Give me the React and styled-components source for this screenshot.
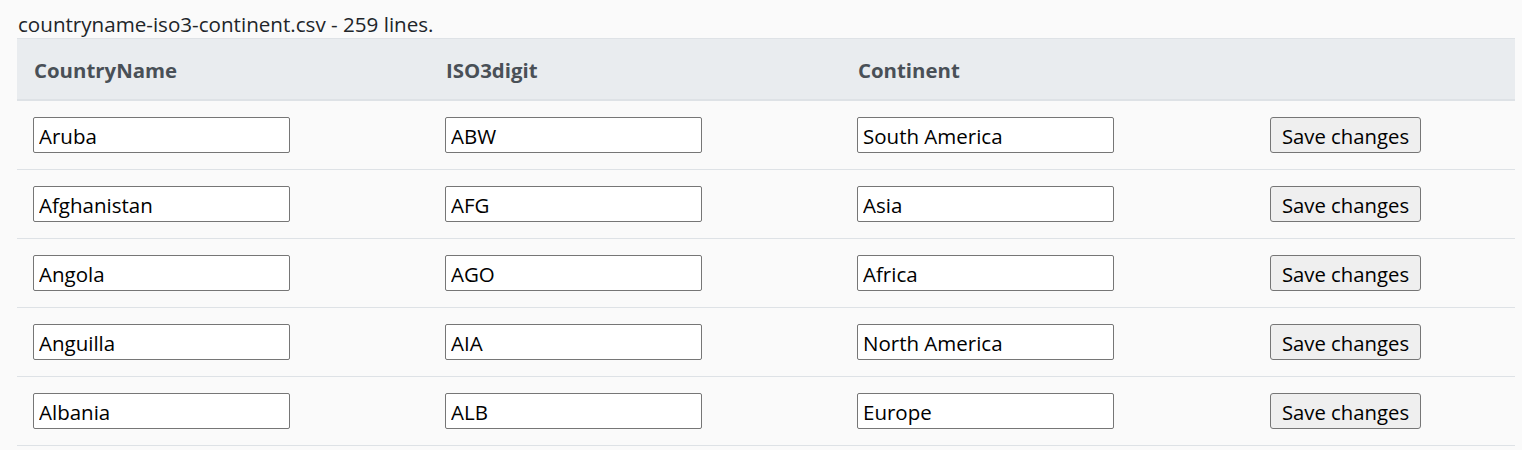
import styled, { createGlobalStyle } from "styled-components";

const countries = [
  { name: "Aruba", iso: "ABW", continent: "South America" },
  { name: "Afghanistan", iso: "AFG", continent: "Asia" },
  { name: "Angola", iso: "AGO", continent: "Africa" },
  { name: "Anguilla", iso: "AIA", continent: "North America" },
  { name: "Albania", iso: "ALB", continent: "Europe" },
];

const App = () => {
  const rows = countries.map((item) => (
    <Row key={item.iso}>
      <Cell>
        <TextInput defaultValue={item.name} />
      </Cell>
      <Cell>
        <TextInput defaultValue={item.iso} />
      </Cell>
      <Cell>
        <TextInput defaultValue={item.continent} />
      </Cell>
      <Cell>
        <SaveBtn>Save changes</SaveBtn>
      </Cell>
    </Row>
  ));

  return (
    <>
      <GlobalStyle />
      <Page>
        <Caption>countryname-iso3-continent.csv - 259 lines.</Caption>
        <Table>
          <HeadRow>
            <HeadCell>CountryName</HeadCell>
            <HeadCell>ISO3digit</HeadCell>
            <HeadCell>Continent</HeadCell>
            <HeadCell />
          </HeadRow>
          {rows}
        </Table>
      </Page>
    </>
  );
};

const GlobalStyle = createGlobalStyle`
  body {
    margin: 0;
    background: #fafafa;
    font-family: "Open Sans", "Noto Sans", sans-serif;
    color: #212529;
  }
`;

const Page = styled.div`
  padding: 0 7px 0 17px;
`;

const Caption = styled.div`
  height: 38px;
  padding-left: 1px;
  font-size: 20.6px;
  line-height: 48px;
  color: #212529;
  white-space: nowrap;
`;

const Table = styled.div`
  width: 1498px;
`;

const HeadRow = styled.div`
  display: grid;
  grid-template-columns: 412px 412px 413px 1fr;
  background: #e9ecef;
  border-top: 1px solid #dee2e6;
  border-bottom: 2px solid #dee2e6;
`;

const HeadCell = styled.div`
  padding: 17px 16px 15px 17px;
  height: 28px;
  font-size: 20.4px;
  font-weight: 700;
  line-height: 28px;
  color: #495057;
  white-space: nowrap;
`;

const Row = styled.div`
  display: grid;
  grid-template-columns: 412px 412px 413px 1fr;
  border-bottom: 1px solid #dee2e6;
`;

const Cell = styled.div`
  padding: 16px;
  display: flex;
  align-items: center;
`;

const TextInput = styled.input`
  box-sizing: border-box;
  width: 257px;
  height: 36px;
  padding: 2px 5px 0;
  border: 1px solid #767676;
  border-radius: 2px;
  background: #fff;
  font-family: "Open Sans", "Noto Sans", sans-serif;
  font-size: 20.5px;
  color: #000;
  outline: none;
`;

const SaveBtn = styled.button`
  box-sizing: border-box;
  width: 151px;
  height: 36px;
  padding: 2px 0 0;
  border: 1px solid #767676;
  border-radius: 3px;
  background: #efefef;
  font-family: "Open Sans", "Noto Sans", sans-serif;
  font-size: 20.3px;
  color: #000;
  white-space: nowrap;
`;

export default App;
